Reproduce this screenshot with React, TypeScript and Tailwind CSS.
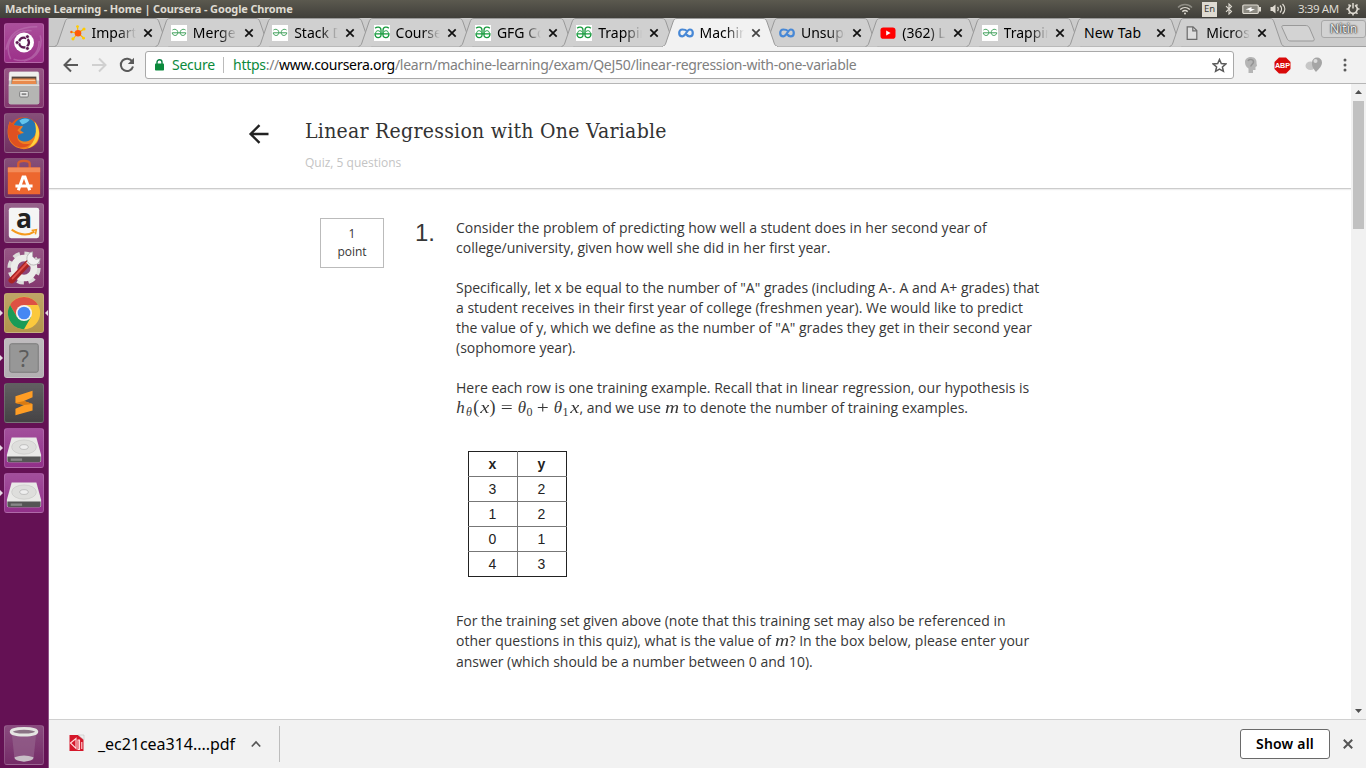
import React from "react";

const UI = "font-['Noto_Sans','Open_Sans',sans-serif]";

/* ---------- favicons ---------- */

function Spark() {
  return (
    <svg width="16" height="16" viewBox="0 0 16 16">
      <g stroke="#f9b800" strokeWidth="1.1">
        <path d="M8 8L7.5 1.5M8 8L14 4M8 8L13.5 13M8 8L3 14M8 8L1 7" />
      </g>
      <g fill="#fc0">
        <circle cx="7.5" cy="1.6" r="1.4" />
        <circle cx="14" cy="4" r="1.6" />
        <circle cx="3" cy="13.8" r="1.6" />
        <circle cx="13.6" cy="13.2" r="1.4" />
      </g>
      <circle cx="1.4" cy="7" r="1.2" fill="#f60" />
      <circle cx="8" cy="8.3" r="3.3" fill="#ff5a0a" />
    </svg>
  );
}

function Geeks({ bold }: { bold?: boolean }) {
  return (
    <svg width="16" height="16" viewBox="0 0 16 16">
      <rect width="16" height="16" fill="#fff" />
      {bold ? (
        <g fill="none" stroke="#159a3c" strokeWidth="1.3">
          <path d="M1.2 3.2C3 1.3 7 1.8 7 5.2V10C7 13.6 1.2 14 1 8.8H15C14.8 14 9 13.6 9 10V5.2C9 1.8 13 1.3 14.8 3.2" />
          <path d="M1.600 8.500C1.600 5 5.400 5 6.600 7.400M14.400 8.500C14.400 5 10.600 5 9.400 7.400" strokeWidth="1" />
        </g>
      ) : (
        <g fill="none" stroke="#3fa05a" strokeWidth="1">
          <path d="M1.5 5C3.5 3.5 6.8 4.5 6.8 7.5C6.8 11.5 1.6 11.3 1.2 7.8H14.8C14.4 11.3 9.2 11.5 9.2 7.5C9.2 4.5 12.5 3.5 14.5 5" />
        </g>
      )}
    </svg>
  );
}

function CourseraMark() {
  return (
    <svg width="16" height="16" viewBox="0 0 16 16">
      <path
        d="M9.2 6.2C7.6 4.6 5.8 4.5 4.4 4.5C2.4 4.5 1.2 6 1.2 7.9C1.2 9.9 2.6 11.3 4.5 11.3C8 11.3 8.6 4.5 11.8 4.5C13.7 4.5 14.8 6 14.8 7.9C14.8 9.9 13.4 11.3 11.6 11.3C9.8 11.3 8.8 10.3 7.9 9"
        fill="none"
        stroke="#4788d6"
        strokeWidth="2.2"
      />
    </svg>
  );
}

function Play() {
  return (
    <svg width="16" height="16" viewBox="0 0 16 16">
      <rect x="0.5" y="2.5" width="15" height="11.2" rx="2.8" fill="#f00" />
      <path d="M6.2 5.6V10.5L10.6 8Z" fill="#fff" />
    </svg>
  );
}

function Page() {
  return (
    <svg width="16" height="16" viewBox="0 0 16 16" fill="none" stroke="#6a6a6a" strokeWidth="1.2">
      <path d="M3.2 1.8H9L12.8 5.6V14.4H3.2Z" fill="#ddd" />
      <path d="M8.8 2V5.8H12.6" />
    </svg>
  );
}

/* ---------- tab strip ---------- */

type TabData = { title: string; icon?: React.ReactNode; active?: boolean };

const tabs: TabData[] = [
  { title: "Impartus", icon: <Spark /> },
  { title: "Merge So", icon: <Geeks /> },
  { title: "Stack Da", icon: <Geeks /> },
  { title: "Courses", icon: <Geeks bold /> },
  { title: "GFG Co", icon: <Geeks bold /> },
  { title: "Trapping", icon: <Geeks bold /> },
  { title: "Machine", icon: <CourseraMark />, active: true },
  { title: "Unsupe", icon: <CourseraMark /> },
  { title: "(362) Le", icon: <Play /> },
  { title: "Trapping", icon: <Geeks /> },
  { title: "New Tab" },
  { title: "Microso", icon: <Page /> },
];

function Tab({ title, icon, active }: TabData) {
  return (
    <div className={`relative flex h-[29px] w-[101.35px] shrink-0 items-center pl-[15.5px] ${active ? "z-10" : ""}`}>
      <svg className="absolute top-0 left-0" width="116" height="29" viewBox="0 0 116 29">
        <path
          d="M0.5 28.5C3 28 3.6 26 4.5 23L11 4C12 1.5 12.5 0.5 15 0.5H101C103.500 0.5 104 1.5 105 4L111.500 23C112.400 26 113 28 115.500 28.5"
          fill={active ? "#f2f2f2" : "#d0d0d0"}
          stroke="#999"
        />
        {active && <path d="M1 28.5H115" stroke="#f2f2f2" />}
      </svg>
      {icon && <div className="relative mr-[6px] w-4">{icon}</div>}
      <div
        className={`relative overflow-hidden text-[14px] leading-[20px] whitespace-nowrap text-black ${
          icon
            ? "w-[44px] [mask-image:linear-gradient(to_right,black_60%,transparent_100%)]"
            : "w-[66px] pl-px tracking-[0.2px]"
        }`}
      >
        {title}
      </div>
      <svg className="relative ml-[7px]" width="10" height="10" viewBox="0 0 10 10">
        <path d="M1.300 1.300L8.700 8.700M8.700 1.300L1.300 8.700" stroke={active ? "#444" : "#111"} strokeWidth="1.700" />
      </svg>
    </div>
  );
}

function TabStrip() {
  return (
    <div className="flex h-[29px] shrink-0 bg-[#cbcbcb] pl-[5px] shadow-[inset_0_-1px_0_#a2a2a2]">
      {tabs.map((t, i) => (
        <Tab key={i} {...t} />
      ))}
      <svg className="mt-[6px] ml-[10px] shrink-0" width="38" height="19" viewBox="0 0 38 19">
        <path d="M4 1.500H25C27.500 1.500 28.500 2 29.500 4L34 14.500C34.600 16.500 34 17 32 17H11C9 17 7.800 16.500 7 14.500L2 3.500C1.500 2 2 1.500 4 1.500Z" fill="#d3d3d3" stroke="#999" />
      </svg>
      <div className="mt-[2px] ml-[3px] flex h-[18px] w-[45px] shrink-0 items-center justify-center rounded-[3px] border border-[#a8a8a8] bg-[#d2d2d2] text-[12px] text-[#eee] [text-shadow:0_0_2px_#333,0_0_1px_#333,0_0_2px_#444]">
        Nitin
      </div>
    </div>
  );
}

/* ---------- toolbar ---------- */

function Toolbar() {
  return (
    <div className="flex h-[37px] shrink-0 items-center border-b border-[#b6b6b6] bg-[#f2f2f2]">
      <svg className="ml-[14px]" width="16" height="16" viewBox="0 0 16 16" fill="none" stroke="#5a5a5a" strokeWidth="2">
        <path d="M15 8H2.500M8 1.500L1.500 8L8 14.500" />
      </svg>
      <svg className="ml-[12px]" width="16" height="16" viewBox="0 0 16 16" fill="none" stroke="#d0d0d0" strokeWidth="2">
        <path d="M1 8H13.500M8 1.500L14.500 8L8 14.500" />
      </svg>
      <svg className="ml-[12px]" width="16" height="16" viewBox="0 0 16 16">
        <path d="M13.300 4.600A6.200 6.200 0 1 0 14 9.500" fill="none" stroke="#5a5a5a" strokeWidth="2" />
        <path d="M15 0.800V7H8.800Z" fill="#5a5a5a" />
      </svg>
      <div className="ml-[10px] flex h-[28px] w-[1089px] items-center rounded-[3px] border border-[#a9a9a9] bg-white text-[14px]">
        <svg className="ml-[9px]" width="9" height="12" viewBox="0 0 9 12">
          <path d="M2 5V3.300A2.500 2.500 0 0 1 7 3.300V5" fill="none" stroke="#0b8043" strokeWidth="1.400" />
          <rect x="0" y="4.600" width="9" height="7" rx="0.800" fill="#0b8a3c" />
        </svg>
        <span className="ml-[8px] w-[50px] pb-[2px] tracking-[-0.25px] text-[#0b8a3c]">Secure</span>
        <span className="ml-px h-4 w-px bg-[#bbb]" />
        <span className="ml-[9px] flex-1 pb-[2px] tracking-[-0.275px] whitespace-nowrap text-[#808080]">
          <span className="text-[#0b8a3c]">https</span>://<span className="text-black">www.coursera.org</span>
          /learn/machine-learning/exam/QeJ50/linear-regression-with-one-variable
        </span>
        <svg className="mr-[6px]" width="15" height="15" viewBox="0 0 15 15">
          <path d="M7.500 1.500L9.300 5.600L13.800 6L10.400 9L11.400 13.300L7.500 11L3.600 13.300L4.600 9L1.200 6L5.700 5.600Z" fill="none" stroke="#5a5a5a" strokeWidth="1.500" />
        </svg>
      </div>
      <svg className="ml-[9px]" width="16" height="18" viewBox="0 0 16 18">
        <path d="M2 6C2 2.500 5 1 8 1C12 1 14 4 13.500 7L14 10L12.500 11V14H10V17H5.500V12.500C3 11 2 9 2 6Z" fill="#b5b5b5" />
        <path d="M5 5C6 2.500 10.500 3 10.500 6C10.500 8.500 7.500 8.300 8 10.500" fill="none" stroke="#949494" strokeWidth="1.500" />
      </svg>
      <svg className="ml-[15px]" width="17" height="17" viewBox="0 0 17 17">
        <path d="M5 0.500H12L16.500 5V12L12 16.500H5L0.500 12V5Z" fill="#d90a0a" />
        <text x="8.500" y="11.200" textAnchor="middle" fill="#fff" fontSize="7.200" fontWeight="700" fontFamily="Liberation Sans, sans-serif">ABP</text>
      </svg>
      <svg className="ml-[14px]" width="18" height="16" viewBox="0 0 18 16">
        <ellipse cx="5.500" cy="8.800" rx="5" ry="4.300" fill="#c6c6c6" />
        <path d="M11 15C9 12.500 6.500 9 7 5.500A5 5 0 0 1 17 5.500C17 9 14 12 11 15Z" fill="#a5a5a5" />
        <circle cx="10.500" cy="4" r="2" fill="#dcdcdc" />
      </svg>
      <svg className="ml-[20px]" width="4" height="14" viewBox="0 0 4 14" fill="#5a5a5a">
        <circle cx="2" cy="2" r="1.500" />
        <circle cx="2" cy="7" r="1.500" />
        <circle cx="2" cy="12" r="1.500" />
      </svg>
    </div>
  );
}

/* ---------- desktop top panel ---------- */

function Panel() {
  return (
    <div className="flex h-[18px] shrink-0 items-center bg-linear-to-b from-[#5b594f] to-[#403f3a] text-[#dfdbd2]">
      <span className="ml-[5px] text-[11px] leading-[18px] font-bold tracking-[-0.15px] whitespace-nowrap">
        Machine Learning - Home | Coursera - Google Chrome
      </span>
      <span className="flex-1" />
      <svg width="16" height="12" viewBox="0 0 16 12" fill="none" strokeWidth="1.400">
        <path d="M1 4.500C5 0.500 11 0.500 15 4.500" stroke="#8f8d85" />
        <path d="M3.200 6.500C6 4 10 4 12.800 6.500" stroke="#dfdbd2" />
        <path d="M5.300 8.600C7 7.200 9 7.200 10.700 8.600" stroke="#dfdbd2" />
        <circle cx="8" cy="10.500" r="1" fill="#dfdbd2" />
      </svg>
      <span className="ml-[9px] flex h-[15px] w-[15px] items-center justify-center bg-[#dfdbd2] text-[9.5px] text-[#3c3b37]">En</span>
      <svg className="ml-[8px]" width="8" height="12" viewBox="0 0 8 12" fill="none" stroke="#dfdbd2" strokeWidth="1.100">
        <path d="M1 3.200L6.500 8.600L4 11V1L6.500 3.400L1 8.800" />
      </svg>
      <svg className="ml-[9px]" width="20" height="11" viewBox="0 0 20 11">
        <rect x="0.800" y="1" width="15.500" height="8.500" rx="1.200" fill="#8c8a82" stroke="#dfdbd2" strokeWidth="1.200" />
        <rect x="17" y="3" width="2" height="4.500" fill="#dfdbd2" />
        <path d="M3.500 5.500L9.500 3V5H13L7.500 8V6Z" fill="#fff" />
      </svg>
      <svg className="ml-[8px]" width="17" height="12" viewBox="0 0 17 12" fill="none" stroke="#dfdbd2" strokeWidth="1.300">
        <path d="M0.500 4H2.500L5.500 1.500V10.500L2.500 8H0.500Z" fill="#dfdbd2" stroke="none" />
        <path d="M7.500 4C8.500 5 8.500 7 7.500 8M10 2.500C12 4.500 12 7.500 10 9.500M12.500 1C15.500 4 15.500 8 12.500 11" />
      </svg>
      <span className="ml-[11px] w-[42px] text-[11.5px] tracking-[-0.4px] whitespace-nowrap">3:39 AM</span>
      <svg className="mr-[6px] ml-[6px]" width="14" height="14" viewBox="0 0 14 14" fill="none" stroke="#dfdbd2">
        <path d="M5 3.200A4.300 4.300 0 1 0 9 3.200" strokeWidth="1.700" />
        <path d="M7 1V6.500" strokeWidth="1.500" />
        <path d="M0.500 7H2.500M11.500 7H13.500M2.500 2.500L3.800 3.800M11.500 2.500L10.200 3.800M2.500 11.800L3.800 10.500M11.500 11.800L10.200 10.500M7 12V13.500" strokeWidth="1.600" />
      </svg>
    </div>
  );
}

/* ---------- launcher ---------- */

function Disk() {
  return (
    <>
      <path d="M7 9H33L38 27V33Q38 35 36 35H4Q2 35 2 33V27Z" fill="#e9e9e7" />
      <path d="M2.500 29H37.500V33Q37.500 35 35.500 35H4.500Q2.500 35 2.500 33Z" fill="#555" />
      <path d="M6 31H18V33.500H6Z" fill="#888" />
      <ellipse cx="20" cy="19" rx="13" ry="7.500" fill="#dededc" stroke="#c6c6c4" strokeWidth="0.700" />
      <ellipse cx="20" cy="19" rx="4.500" ry="2.500" fill="#eee" stroke="#b4b4b4" strokeWidth="0.800" />
    </>
  );
}

type Item = { tile: string; art: React.ReactNode; running?: boolean; focused?: boolean };

const items: Item[] = [
  {
    tile: "bg-[#9c3089]",
    art: (
      <>
        <path d="M1 27C4 11 12 3 34 3M6 37C-2 20 10 5 28 7M20 39C36 36 40 22 37 12M9 37C25 42 36 32 36 18" fill="none" stroke="#bd75b2" strokeWidth="1.600" opacity="0.600" />
        <circle cx="20" cy="19.500" r="10.500" fill="#fff" />
        <circle cx="20" cy="19.500" r="5.200" fill="none" stroke="#5d1a52" strokeWidth="2.500" strokeDasharray="9.400 1.490" strokeDashoffset="4.700" />
        <circle cx="12.800" cy="19.500" r="2" fill="#5d1a52" stroke="#fff" strokeWidth="0.700" />
        <circle cx="23.600" cy="13.300" r="2" fill="#5d1a52" stroke="#fff" strokeWidth="0.700" />
        <circle cx="23.600" cy="25.700" r="2" fill="#5d1a52" stroke="#fff" strokeWidth="0.700" />
      </>
    ),
  },
  {
    tile: "bg-[#84386f]",
    art: (
      <>
        <rect x="4" y="3" width="32" height="34" rx="2" fill="#c9c9c7" />
        <path d="M5 3H35L36 12H4Z" fill="#efefed" />
        <path d="M7 8H33V16H7Z" fill="#54453d" />
        <path d="M8 10H32L33 16H7Z" fill="#e88a4d" />
        <path d="M8 12H32" stroke="#fbd2a9" />
        <rect x="4" y="16" width="32" height="21" rx="1.500" fill="#b5b5b3" />
        <path d="M4 17H36" stroke="#e5e5e3" strokeWidth="1.500" />
        <rect x="15.500" y="23.500" width="9" height="6" rx="1" fill="#ededed" stroke="#757575" />
        <rect x="17.500" y="25.500" width="5" height="2" fill="#888" />
      </>
    ),
  },
  {
    tile: "bg-[#713061]",
    art: (
      <>
        <circle cx="20" cy="20" r="16.500" fill="#e25718" />
        <circle cx="21" cy="17" r="13" fill="#2577b5" />
        <path d="M15 7Q20 3 26 6Q23 10 18 11Z" fill="#63c4ec" />
        <path d="M31 8C36 18 31 28 22 29C15 29 12 25 14 21L20 20L16 17L19 13L10 12L5 8C0 20 3 36 20 37C38 36 40 19 31 8Z" fill="#f08020" />
        <path d="M31 8C40 18 36 33 24 36C33 29 34 17 31 8Z" fill="#ffd33f" />
        <path d="M5 8C2 17 2 26 9 32C15 37 23 36 27 31C21 33 12 31 13 22L17 21L13 17L17 13L10 12Z" fill="#df5120" />
      </>
    ),
  },
  {
    tile: "bg-[#713061]",
    art: (
      <>
        <path d="M14 11V5Q14 2 20 2Q26 2 26 5V11" fill="none" stroke="#d85d2d" strokeWidth="2.500" />
        <path d="M3 9H37V37H3Z" fill="#ed672f" />
        <path d="M3 9H37V14H3Z" fill="#f38b59" />
        <path d="M14 33L19 19H21L26 33M11 28.500H29" fill="none" stroke="#fff" strokeWidth="3.200" />
      </>
    ),
  },
  {
    tile: "bg-[#844576]",
    art: (
      <>
        <rect x="4" y="4" width="32" height="32" rx="2.500" fill="#f5f5f5" />
        <text x="20" y="25.500" textAnchor="middle" fontFamily="Open Sans, sans-serif" fontSize="28" fontWeight="700" fill="#222">a</text>
        <path d="M7 27Q20 36 31 29" fill="none" stroke="#f59a1c" strokeWidth="2.200" />
        <path d="M28 28L33 27L32 32" fill="none" stroke="#f59a1c" strokeWidth="1.600" />
      </>
    ),
  },
  {
    tile: "bg-[#84386f]",
    art: (
      <>
        <circle cx="20" cy="20" r="15" fill="none" stroke="#dcdcda" strokeWidth="5" strokeDasharray="7 4.780" />
        <circle cx="20" cy="20" r="10.500" fill="none" stroke="#ececea" strokeWidth="7" />
        <path d="M7 33L24 15" stroke="#a92323" strokeWidth="6.500" strokeLinecap="round" />
        <path d="M8 31L23 15" stroke="#e2514a" strokeWidth="2" strokeLinecap="round" />
        <path d="M24 16L28 12" stroke="#e4e4e4" strokeWidth="5" />
        <path d="M29 3A7 7 0 1 0 37 10L32.500 11L29 8Z" fill="#f2f2f2" stroke="#aaa" strokeWidth="0.800" />
      </>
    ),
  },
  {
    tile: "bg-[#b3954c]",
    running: true,
    focused: true,
    art: (
      <>
        <circle cx="20" cy="20" r="17" fill="#fbc93d" />
        <path d="M5.300 11.500A17 17 0 0 1 34.700 11.500H20L12.600 24.300Z" fill="#dd5144" />
        <path d="M5.300 11.500A17 17 0 0 0 20 37L27.400 24.300H12.600Z" fill="#199b57" />
        <circle cx="20" cy="20" r="8.500" fill="#f3f3f3" />
        <circle cx="20" cy="20" r="6.700" fill="#4587f3" />
      </>
    ),
  },
  {
    tile: "bg-[#b4b0b3]",
    running: true,
    art: (
      <>
        <rect x="5" y="5" width="30" height="30" rx="2" fill="#979797" stroke="#777" />
        <text x="20" y="29" textAnchor="middle" fontFamily="Open Sans, sans-serif" fontSize="25" fill="#5c5c5c">?</text>
      </>
    ),
  },
  {
    tile: "bg-[#454345]",
    art: (
      <>
        <path d="M11 13L29 7V14L20 18L29 21V28L11 33V26L20 22L11 20Z" fill="#ff9d24" />
        <path d="M11 20L20 18L29 21L20 22Z" fill="#d97b13" />
      </>
    ),
  },
  { tile: "bg-[#92308a]", running: true, art: <Disk /> },
  { tile: "bg-[#92308a]", running: true, art: <Disk /> },
];

function Tile({ tile, art, running, focused }: Item) {
  return (
    <div className="flex h-[45px] w-[48px] shrink-0 items-center">
      <svg className="w-[4px]" width="4" height="8" viewBox="0 0 4 8">
        {running && <path d="M0 1L3 4L0 7Z" fill="#e6dbe4" />}
      </svg>
      <div className={`h-[40px] w-[40px] rounded-[3px] border border-white/15 ${tile} bg-linear-to-b from-white/15 to-transparent`}>
        <svg width="38" height="38" viewBox="0 0 40 40">{art}</svg>
      </div>
      <svg className="w-[4px]" width="4" height="8" viewBox="0 0 4 8">
        {focused && <path d="M4 1L1 4L4 7Z" fill="#e6dbe4" />}
      </svg>
    </div>
  );
}

function Launcher() {
  return (
    <div className="flex w-[49px] shrink-0 flex-col border-r border-[#8f5587] bg-[#641154] pt-[2px]">
      {items.map((it, i) => (
        <Tile key={i} {...it} />
      ))}
      <div className="flex-1" />
      <Tile
        tile="bg-[#752c68]"
        art={
          <>
            <path d="M7 6L10 35Q20 39 30 35L33 6Z" fill="#94628c" opacity="0.700" />
            <path d="M10 33Q20 29 30 33Q30 37 20 37.500Q10 37 10 33Z" fill="#c9bfc7" />
            <ellipse cx="20" cy="6" rx="13.500" ry="3.500" fill="#8b7385" stroke="#e5e5e2" strokeWidth="3" />
          </>
        }
      />
      <div className="h-px" />
    </div>
  );
}

/* ---------- quiz page ---------- */

const MATH = "font-['Liberation_Serif',serif] text-[17px] leading-none inline-block text-center";

function MathM() {
  return (
    <span className={`${MATH} w-[15px] italic`}>
      <span className="inline-block scale-x-[1.15]">m</span>
    </span>
  );
}

function Hypothesis() {
  return (
    <>
      <span className={`${MATH} w-[9px] italic`}>h</span>
      <span className="relative top-[3px] inline-block w-[8px] text-center font-['Liberation_Serif',serif] text-[12px] leading-none italic">θ</span>
      <span className={`${MATH} w-[6.500px] text-[18px]`}>(</span>
      <span className={`${MATH} w-[10px] italic`}>
        <span className="inline-block scale-x-[1.200]">x</span>
      </span>
      <span className={`${MATH} w-[6px] text-[18px]`}>)</span>
      <span className={`${MATH} w-[22px]`}>
        <span className="inline-block scale-x-[1.250]">=</span>
      </span>
      <span className={`${MATH} w-[9px] italic`}>θ</span>
      <span className="relative top-[3px] inline-block w-[6px] font-['Liberation_Serif',serif] text-[12px] leading-none">0</span>
      <span className={`${MATH} w-[21px]`}>
        <span className="inline-block scale-x-[1.250]">+</span>
      </span>
      <span className={`${MATH} w-[9px] italic`}>θ</span>
      <span className="relative top-[3px] inline-block w-[7px] font-['Liberation_Serif',serif] text-[12px] leading-none">1</span>
      <span className={`${MATH} w-[10px] italic`}>
        <span className="inline-block scale-x-[1.200]">x</span>
      </span>
    </>
  );
}

const rows = [
  ["3", "2"],
  ["1", "2"],
  ["0", "1"],
  ["4", "3"],
];

function Quiz() {
  return (
    <div className="flex-1 overflow-hidden bg-white font-['Open_Sans',sans-serif] text-[#373737]">
      <div className="flex h-[105px] border-b border-[#ccc] shadow-[0_1px_1px_#eee]">
        <svg className="mt-[40px] ml-[199px]" width="22" height="20" viewBox="0 0 22 20" fill="none" stroke="#222" strokeWidth="2.400">
          <path d="M20.500 10H3M11.500 1.200L2.600 10L11.500 18.800" />
        </svg>
        <div className="ml-[35px] pt-[34px]">
          <div className="font-['DejaVu_Serif_Condensed','DejaVu_Serif',serif] text-[21px] leading-[26px] tracking-[0.270px] whitespace-nowrap text-[#333]">
            Linear Regression with One Variable
          </div>
          <div className="mt-[10px] text-[12px] leading-[18px] text-[#c4c4c4]">Quiz, 5 questions</div>
        </div>
      </div>
      <div className="flex pt-[29px] pl-[271px]">
        <div className="flex h-[50px] w-[64px] flex-col items-center justify-center border border-[#bbb] text-[12px] leading-[18px]">
          <span>1</span>
          <span>point</span>
        </div>
        <div className="ml-[31px] w-[41px] font-['Liberation_Sans',sans-serif] text-[24px] leading-[30px]">1.</div>
        <div className="flex flex-col text-[14px] leading-[20px] whitespace-nowrap">
          <p>
            Consider the problem of predicting how well a student does in her second year of
            <br />
            college/university, given how well she did in her first year.
          </p>
          <p className="mt-5">
            Specifically, let x be equal to the number of "A" grades (including A-. A and A+ grades) that
            <br />
            a student receives in their first year of college (freshmen year). We would like to predict
            <br />
            the value of y, which we define as the number of "A" grades they get in their second year
            <br />
            (sophomore year).
          </p>
          <p className="mt-5 h-10">
            Here each row is one training example. Recall that in linear regression, our hypothesis is
            <br />
            <Hypothesis />, and we use <MathM /> to denote the number of training examples.
          </p>
          <table className="mt-[33px] ml-[12px] w-[99px] border-collapse border border-[#222] text-center font-['Liberation_Sans',sans-serif] text-[14px] leading-[20px] text-[#222]">
            <tbody>
              <tr className="h-[25px]">
                <th className="w-[49px] border border-[#777] border-t-[#222] border-l-[#222] p-0 pr-px font-bold">x</th>
                <th className="w-[49px] border border-[#777] border-t-[#222] border-r-[#222] p-0 pr-px font-bold">y</th>
              </tr>
              {rows.map(([x, y], i) => (
                <tr key={i} className="h-[25px]">
                  <td className={`border border-[#777] border-l-[#222] p-0 pr-px ${i === 3 ? "border-b-[#222]" : ""}`}>{x}</td>
                  <td className={`border border-[#777] border-r-[#222] p-0 pr-px ${i === 3 ? "border-b-[#222]" : ""}`}>{y}</td>
                </tr>
              ))}
            </tbody>
          </table>
          <p className="mt-[34px] h-[41px]">
            For the training set given above (note that this training set may also be referenced in
            <br />
            other questions in this quiz), what is the value of <MathM />? In the box below, please enter your
          </p>
          <p>answer (which should be a number between 0 and 10).</p>
        </div>
      </div>
    </div>
  );
}

function Scrollbar() {
  return (
    <div className="flex w-[15px] shrink-0 flex-col items-center bg-[#f1f1f1]">
      <svg width="15" height="17" viewBox="0 0 15 17">
        <path d="M4 10L7.500 6L11 10Z" fill="#505050" />
      </svg>
      <div className="h-[128px] w-[11px] bg-[#c1c1c1]" />
      <div className="flex-1" />
      <svg width="15" height="17" viewBox="0 0 15 17">
        <path d="M4 7L7.500 11L11 7Z" fill="#505050" />
      </svg>
    </div>
  );
}

function Downloads() {
  return (
    <div className="flex h-[49px] shrink-0 items-center border-t border-[#d0d0d0] bg-[#f2f2f2]">
      <svg className="mb-[2px] ml-[20px]" width="16" height="18" viewBox="0 0 16 18">
        <path d="M0.500 1H10L14.500 5V17H0.500Z" fill="#d5172a" />
        <path d="M9 1H15V6Z" fill="#eee" stroke="#bbb" strokeWidth="0.500" />
        <path d="M1.500 9L7 4.500V14.500Z" fill="none" stroke="#ffdcdc" strokeWidth="1.100" />
        <path d="M9 6H10.500V15.500H9ZM12.800 8V15" fill="none" stroke="#ffdcdc" strokeWidth="1.100" />
      </svg>
      <span className="ml-[13px] w-[140px] text-[16px] tracking-[-0.030px] whitespace-nowrap text-black">_ec21cea314....pdf</span>
      <svg className="ml-[13px]" width="10" height="8" viewBox="0 0 10 8" fill="none" stroke="#555" strokeWidth="1.700">
        <path d="M0.800 6.500L5 2L9.200 6.500" />
      </svg>
      <span className="ml-[18px] h-[36px] w-px bg-[#bdbdbd]" />
      <span className="flex-1" />
      <span className="flex h-[30px] w-[90px] items-center justify-center rounded-[3px] border border-[#6a6a6a] bg-white pb-[2px] text-[14px] font-semibold tracking-[0.200px] text-black">
        Show all
      </span>
      <svg className="mr-[13px] ml-[13px]" width="10" height="10" viewBox="0 0 10 10">
        <path d="M0.800 0.800L9.200 9.200M9.200 0.800L0.800 9.200" stroke="#555" strokeWidth="2" />
      </svg>
    </div>
  );
}

export default function App() {
  return (
    <div className={`flex h-[768px] w-[1366px] flex-col overflow-hidden ${UI}`}>
      <Panel />
      <div className="flex min-h-0 flex-1">
        <Launcher />
        <div className="flex min-w-0 flex-1 flex-col">
          <TabStrip />
          <Toolbar />
          <div className="flex min-h-0 flex-1">
            <Quiz />
            <Scrollbar />
          </div>
          <Downloads />
        </div>
      </div>
    </div>
  );
}
